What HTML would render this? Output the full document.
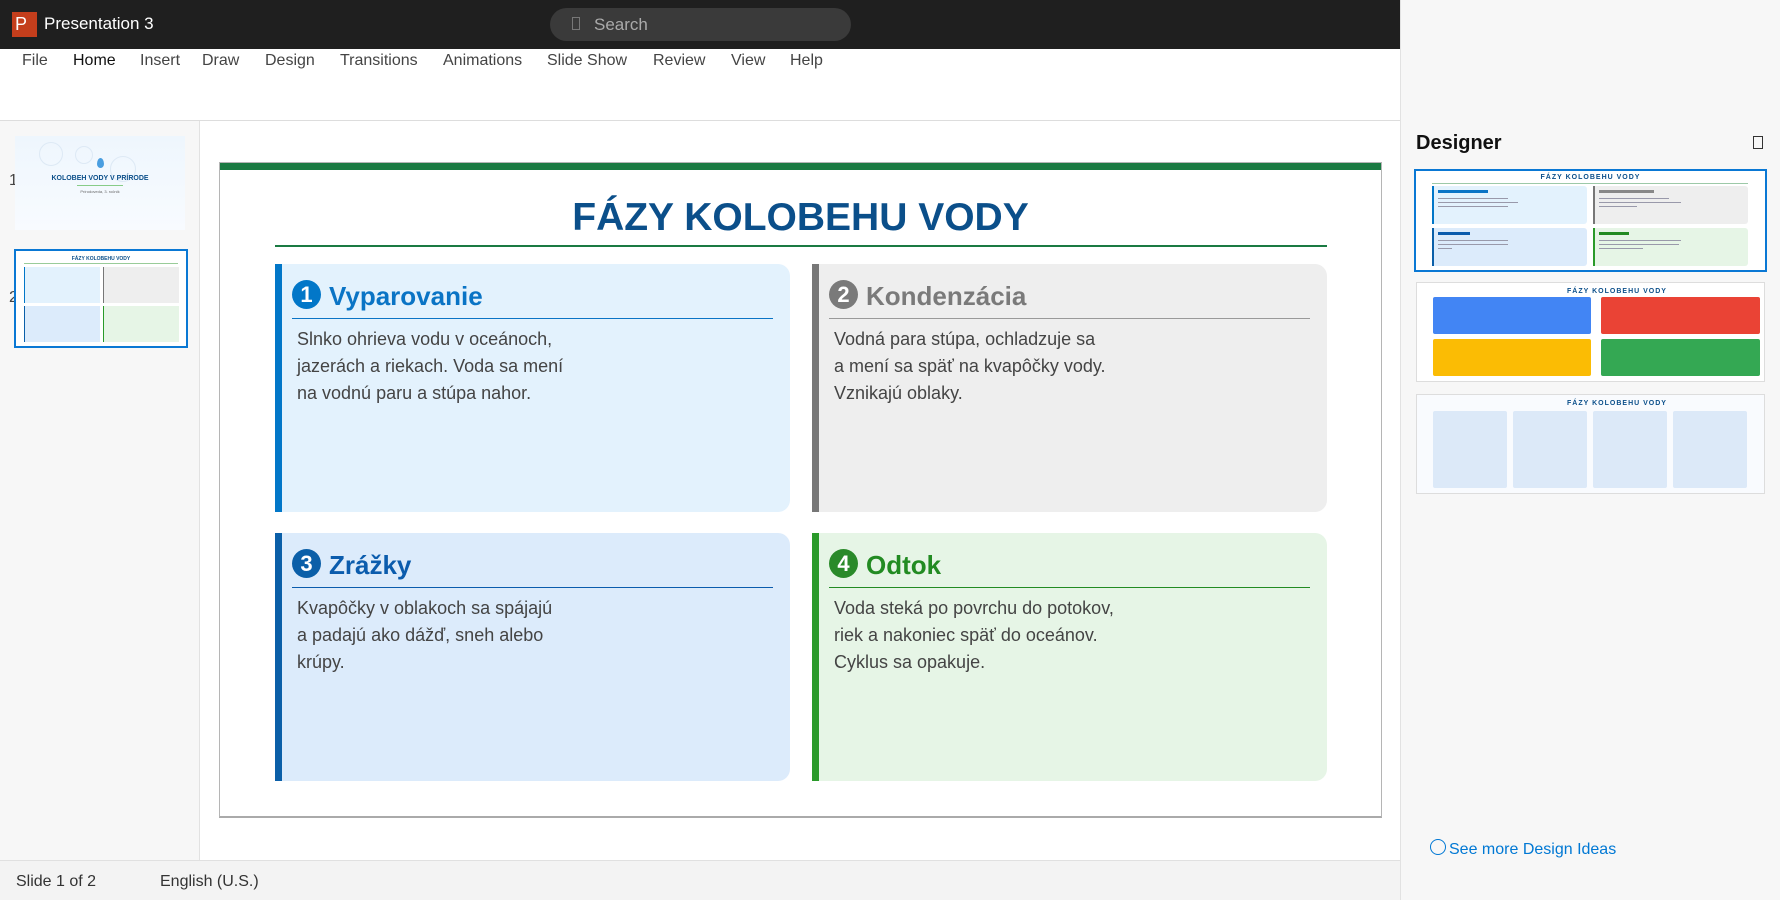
<!DOCTYPE html>
<html><head><meta charset="utf-8"><style>
*{margin:0;padding:0;box-sizing:border-box}
body{width:1780px;height:900px;position:relative;overflow:hidden;font-family:"Liberation Sans",sans-serif;background:#fff}
.a{position:absolute}
.tb{left:0;top:0;width:1400px;height:49px;background:#1f1f1f}
.menu span{position:absolute;top:52px;font-size:16px;color:#444}
.card{position:absolute;width:515px;height:248px;border-radius:0 12px 12px 0;border-left:7px solid}
.card .c{position:absolute;left:10px;top:16px;width:29px;height:29px;border-radius:50%;color:#fff;font-weight:bold;font-size:22px;text-align:center;line-height:29px}
.card .t{position:absolute;left:47px;top:17px;font-size:26px;font-weight:bold}
.card .l{position:absolute;left:10px;right:17px;top:54px;height:1px}
.card .b{position:absolute;left:15px;top:62px;font-size:18px;line-height:27px;color:#444}
.mini{position:absolute;background:#fff}
.tx{position:absolute;height:1px;background:#99a}
</style></head><body>
<div class="a tb"></div>
<div class="a" style="left:12px;top:12px;width:25px;height:25px;background:#c43e1c;color:#fff;font-size:18px;line-height:25px;padding-left:3px">P</div>
<div class="a" style="left:44px;top:14px;color:#fff;font-size:17px">Presentation 3</div>
<div class="a" style="left:550px;top:8px;width:301px;height:33px;border-radius:17px;background:#3a3a3a"></div>
<div class="a" style="left:572px;top:17px;width:8px;height:13px;border:1px solid #777"></div>
<div class="a" style="left:594px;top:15px;color:#aaa;font-size:17px">Search</div>
<div class="a" style="left:63px;top:49px;width:64px;height:2px;background:#fff"></div>
<div class="menu">
<span style="left:22px">File</span><span style="left:73px;color:#111">Home</span><span style="left:140px">Insert</span><span style="left:202px">Draw</span><span style="left:265px">Design</span><span style="left:340px">Transitions</span><span style="left:443px">Animations</span><span style="left:547px">Slide Show</span><span style="left:653px">Review</span><span style="left:731px">View</span><span style="left:790px">Help</span></div>
<div class="a" style="left:0;top:120px;width:1400px;height:1px;background:#ddd"></div>
<div class="a" style="left:0;top:121px;width:200px;height:740px;background:#f7f7f7;border-right:1px solid #e2e2e2"></div>
<div class="a" style="left:9px;top:172px;font-size:16px;color:#444">1</div>
<div class="a" style="left:9px;top:289px;font-size:16px;color:#444">2</div>
<div class="a" style="left:15px;top:136px;width:170px;height:94px;background:linear-gradient(#eef6fd,#f8fbff)">
 <div class="a" style="left:24px;top:6px;width:24px;height:24px;border:1px solid #dde9f5;border-radius:50%"></div>
 <div class="a" style="left:60px;top:10px;width:18px;height:18px;border:1px solid #dde9f5;border-radius:50%"></div>
 <div class="a" style="left:95px;top:20px;width:26px;height:26px;border:1px solid #dde9f5;border-radius:50%"></div>
 <div class="a" style="left:82px;top:22px;width:7px;height:10px;background:#4a9ee0;border-radius:50% 50% 50% 50%/60% 60% 40% 40%"></div>
 <div class="a" style="left:0;width:170px;top:39px;text-align:center;font-size:7px;font-weight:bold;color:#0b4f8a">KOLOBEH VODY V PRÍRODE</div>
 <div class="a" style="left:62px;top:49px;width:46px;height:1px;background:#8c8"></div>
 <div class="a" style="left:0;width:170px;top:53px;text-align:center;font-size:4px;color:#666">Prírodoveda, 3. ročník</div>
</div>
<div class="a" style="left:14px;top:249px;width:174px;height:99px;border:2px solid #0a78d4;background:#fff">
 <div class="a" style="left:0;width:170px;top:5px;text-align:center;font-size:5px;font-weight:bold;color:#0b4f8a">FÁZY KOLOBEHU VODY</div>
 <div class="a" style="left:8px;top:12px;width:154px;height:1px;background:#9c9"></div>
 <div class="a" style="left:8px;top:16px;width:76px;height:36px;background:#e3f2fd;border-left:1px solid #0277c8"></div>
 <div class="a" style="left:87px;top:16px;width:76px;height:36px;background:#eee;border-left:1px solid #777"></div>
 <div class="a" style="left:8px;top:55px;width:76px;height:36px;background:#dcebfb;border-left:1px solid #0b5fa8"></div>
 <div class="a" style="left:87px;top:55px;width:76px;height:36px;background:#e6f5e6;border-left:1px solid #2a9a2a"></div>
</div>
<!-- slide -->
<div class="a" style="left:219px;top:162px;width:1163px;height:656px;border:1px solid #b5b5b5;border-bottom:2px solid #aaa;background:#fff">
 <div class="a" style="left:0;top:0;width:1161px;height:7px;background:#1a7a42"></div>
 <div class="a" style="left:0;width:1161px;top:33px;text-align:center;font-size:39px;font-weight:bold;color:#0b4f8a">FÁZY KOLOBEHU VODY</div>
 <div class="a" style="left:55px;top:82px;width:1052px;height:2px;background:#1a7a42"></div>
 <div class="card" style="left:55px;top:101px;background:#e3f2fd;border-color:#0277c8"><div class="c" style="background:#0277c8">1</div><div class="t" style="color:#0a74c5">Vyparovanie</div><div class="l" style="background:#0a74c5"></div><div class="b">Slnko ohrieva vodu v oceánoch,<br>jazerách a riekach. Voda sa mení<br>na vodnú paru a stúpa nahor.</div></div>
 <div class="card" style="left:592px;top:101px;background:#eeeeee;border-color:#777"><div class="c" style="background:#7a7a7a">2</div><div class="t" style="color:#7a7a7a">Kondenzácia</div><div class="l" style="background:#999"></div><div class="b">Vodná para stúpa, ochladzuje sa<br>a mení sa späť na kvapôčky vody.<br>Vznikajú oblaky.</div></div>
 <div class="card" style="left:55px;top:370px;background:#dcebfb;border-color:#0b5fa8"><div class="c" style="background:#0b5fa8">3</div><div class="t" style="color:#0b5cad">Zrážky</div><div class="l" style="background:#0b5cad"></div><div class="b">Kvapôčky v oblakoch sa spájajú<br>a padajú ako dážď, sneh alebo<br>krúpy.</div></div>
 <div class="card" style="left:592px;top:370px;background:#e6f5e6;border-color:#2a9a2a"><div class="c" style="background:#2a8a2a">4</div><div class="t" style="color:#228b22">Odtok</div><div class="l" style="background:#228b22"></div><div class="b">Voda steká po povrchu do potokov,<br>riek a nakoniec späť do oceánov.<br>Cyklus sa opakuje.</div></div>
</div>
<!-- status -->
<div class="a" style="left:0;top:860px;width:1400px;height:40px;background:#f3f3f3;border-top:1px solid #e0e0e0"></div>
<div class="a" style="left:16px;top:873px;font-size:16px;color:#333">Slide 1 of 2</div>
<div class="a" style="left:160px;top:873px;font-size:16px;color:#333">English (U.S.)</div>
<!-- designer -->
<div class="a" style="left:1400px;top:0;width:380px;height:900px;background:#f7f7f7;border-left:1px solid #e2e2e2"></div>
<div class="a" style="left:1416px;top:132px;font-size:20px;font-weight:bold;color:#111">Designer</div>
<div class="a" style="left:1753px;top:136px;width:10px;height:13px;border:1px solid #333"></div>
<div class="mini" style="left:1414px;top:169px;width:353px;height:103px;border:2px solid #0a78d4">
 <div class="a" style="left:0;width:349px;top:3px;text-align:center;font-size:7px;font-weight:bold;color:#0b4f8a;letter-spacing:1px">FÁZY KOLOBEHU VODY</div>
 <div class="a" style="left:16px;top:12px;width:316px;height:1px;background:#9cc9a8"></div>
 <div class="a" style="left:16px;top:15px;width:155px;height:38px;background:#e3f2fd;border-left:2px solid #0277c8;border-radius:0 3px 3px 0"></div>
 <div class="a" style="left:177px;top:15px;width:155px;height:38px;background:#eee;border-left:2px solid #777;border-radius:0 3px 3px 0"></div>
 <div class="a" style="left:16px;top:57px;width:155px;height:38px;background:#dcebfb;border-left:2px solid #0b5fa8;border-radius:0 3px 3px 0"></div>
 <div class="a" style="left:177px;top:57px;width:155px;height:38px;background:#e6f5e6;border-left:2px solid #2a9a2a;border-radius:0 3px 3px 0"></div>
 <div class="tx" style="left:22px;top:19px;width:50px;height:3px;background:#0a74c5"></div>
 <div class="tx" style="left:183px;top:19px;width:55px;height:3px;background:#888"></div>
 <div class="tx" style="left:22px;top:61px;width:32px;height:3px;background:#0b5cad"></div>
 <div class="tx" style="left:183px;top:61px;width:30px;height:3px;background:#228b22"></div>
 <div class="tx" style="left:22px;top:27px;width:70px"></div><div class="tx" style="left:22px;top:31px;width:80px"></div><div class="tx" style="left:22px;top:35px;width:70px"></div>
 <div class="tx" style="left:183px;top:27px;width:70px"></div><div class="tx" style="left:183px;top:31px;width:82px"></div><div class="tx" style="left:183px;top:35px;width:38px"></div>
 <div class="tx" style="left:22px;top:69px;width:70px"></div><div class="tx" style="left:22px;top:73px;width:70px"></div><div class="tx" style="left:22px;top:77px;width:14px"></div>
 <div class="tx" style="left:183px;top:69px;width:82px"></div><div class="tx" style="left:183px;top:73px;width:80px"></div><div class="tx" style="left:183px;top:77px;width:44px"></div>
</div>
<div class="mini" style="left:1416px;top:282px;width:349px;height:100px;border:1px solid #ddd">
 <div class="a" style="left:0;width:400px;top:5px;text-align:center;font-size:7px;font-weight:bold;color:#0b4f8a;letter-spacing:1px">FÁZY KOLOBEHU VODY</div>
 <div class="a" style="left:16px;top:14px;width:158px;height:37px;background:#4285f4;border-radius:2px"></div>
 <div class="a" style="left:184px;top:14px;width:159px;height:37px;background:#ea4335;border-radius:2px"></div>
 <div class="a" style="left:16px;top:56px;width:158px;height:37px;background:#fbbc04;border-radius:2px"></div>
 <div class="a" style="left:184px;top:56px;width:159px;height:37px;background:#34a853;border-radius:2px"></div>
</div>
<div class="mini" style="left:1416px;top:394px;width:349px;height:100px;border:1px solid #ddd;background:#f9fbfe">
 <div class="a" style="left:0;width:400px;top:5px;text-align:center;font-size:7px;font-weight:bold;color:#0b4f8a;letter-spacing:1px">FÁZY KOLOBEHU VODY</div>
 <div class="a" style="left:16px;top:16px;width:74px;height:77px;background:#dce9f8;border-radius:2px"></div>
 <div class="a" style="left:96px;top:16px;width:74px;height:77px;background:#dce9f8;border-radius:2px"></div>
 <div class="a" style="left:176px;top:16px;width:74px;height:77px;background:#dce9f8;border-radius:2px"></div>
 <div class="a" style="left:256px;top:16px;width:74px;height:77px;background:#dce9f8;border-radius:2px"></div>
</div>
<div class="a" style="left:1430px;top:839px;width:16px;height:16px;border:1px solid #0078d4;border-radius:50%"></div>
<div class="a" style="left:1449px;top:841px;font-size:16px;color:#0078d4">See more Design Ideas</div>
</body></html>
